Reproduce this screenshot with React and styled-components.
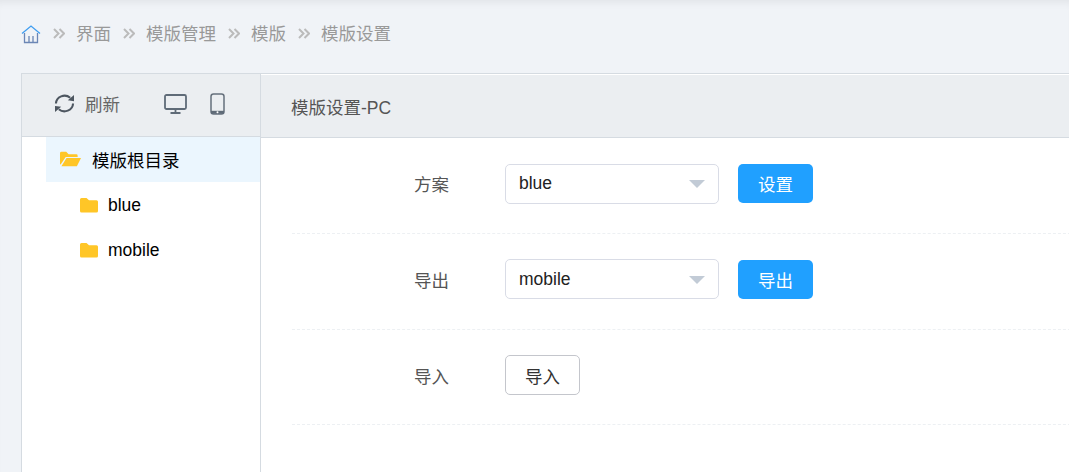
import React from "react";
import styled, { createGlobalStyle } from "styled-components";

const Global = createGlobalStyle`
  html, body { margin: 0; padding: 0; height: 100%; overflow: hidden; background: #f0f3f7; }
  body { font-family: "Liberation Sans", "Noto Sans CJK SC", sans-serif; }
  * { box-sizing: border-box; }
`;
const Page = styled.div`
  width: 1069px; height: 472px; overflow: hidden; background: #f0f3f7;
  box-shadow: inset 0 8px 8px -6px rgba(0,0,0,.07);
`;
const Crumbs = styled.nav`
  height: 73px; padding: 0 0 6px 21px; display: flex; align-items: center;
  font-size: 17.5px; color: #999;
`;
const CrumbText = styled.span`line-height: 24px;`;
const Sep = styled.svg`width: 12px; height: 11px; margin: 0 11px 0 12px; flex: none;`;
const Workspace = styled.div`
  display: flex; width: 1100px; height: 399px;
  border-top: 1px solid #d5dbe1; border-left: 1px solid #d5dbe1; margin-left: 21px;
`;
const Side = styled.aside`
  width: 239px; flex: none; background: #fff; border-right: 1px solid #d5dbe1;
`;
const SideBar = styled.div`
  height: 63px; background: #ebeef1; border-bottom: 1px solid #d5dbe1;
  display: flex; align-items: center; padding: 0 0 3px 32px; color: #666; font-size: 17.5px;
`;
const RefreshLabel = styled.span`margin-left: 10px; margin-right: 44px;`;
const Phone = styled.svg`margin-left: 23px;`;
const TreeRoot = styled.div`
  margin-left: 24px; height: 45px; background: #ebf6fe; display: flex; align-items: center;
  padding: 0 0 1px 14px; font-size: 17.5px; color: #000; gap: 11px;
`;
const TreeItem = styled.div`
  height: 45px; padding-left: 58px; padding-top: 1px; display: flex; align-items: center; gap: 10px;
  font-size: 17.5px; color: #000;
`;
const Main = styled.main`flex: 1; background: #fff;`;
const MainHead = styled.header`
  height: 63px; margin-top: 1px; background: #ebeef1; border-bottom: 1px solid #d5dbe1;
  display: flex; align-items: center; padding: 0 0 0 30px; font-size: 17.5px; color: #555;
`;
const Form = styled.div`padding-left: 31px;`;
const Row = styled.div`
  height: ${p => p.$h}px; border-bottom: 1px dashed #edf0f3;
  display: flex; align-items: center; padding: 0 0 ${p => p.$pb}px 122px;
`;
const Label = styled.label`width: 91px; font-size: 17.5px; color: #555; flex: none;`;
const Select = styled.div`
  width: 214px; height: 40px; border: 1px solid #d9dce6; border-radius: 5px; background: #fff;
  display: flex; align-items: center; justify-content: space-between;
  padding: 0 13px ${p => p.$pb}px 13px; font-size: 17.5px; color: #222;
`;
const Caret = styled.i`
  width: 0; height: 0; border-left: 8px solid transparent; border-right: 8px solid transparent;
  border-top: 8px solid #c2cbd6; margin-top: 1px;
`;
const Primary = styled.button`
  width: 75px; height: 39px; margin-left: 19px; border: 0; border-radius: 5px; background: #20a0ff;
  color: #fff; font: inherit; font-size: 17.5px; padding: 0;
`;
const Plain = styled.button`
  width: 75px; height: 40px; border: 1px solid #c4c6cc; border-radius: 5px; background: #fff;
  color: #333; font: inherit; font-size: 17.5px; padding: 0;
`;

const Chevrons = () => (
  <Sep viewBox="0 0 12 11" fill="none" stroke="#bbb" strokeWidth="2">
    <path d="M1 1l4.500 4.500L1 10M6.500 1L11 5.500 6.500 10" />
  </Sep>
);
const Folder = () => (
  <svg width="18" height="16" viewBox="0 0 18 16">
    <path fill="#ffc627" d="M0 2.500A1.500 1.500 0 0 1 1.500 1h5L9 3.300h7.500A1.500 1.500 0 0 1 18 4.800V14a1.500 1.500 0 0 1-1.500 1.500h-15A1.500 1.500 0 0 1 0 14z" />
  </svg>
);
const OpenFolder = () => (
  <svg width="21" height="16" viewBox="0 0 22 16">
    <path fill="#ffc627" d="M0 2a1.500 1.500 0 0 1 1.500-1.500h5L9 3h8a1.500 1.500 0 0 1 1.500 1.500V6H6L1.200 13 0 14z" />
    <path fill="#ffc627" d="M6.800 7H22l-4.300 8.500H1.500z" />
  </svg>
);

export default function App() {
  return (
    <Page>
      <Global />
      <Crumbs>
        <svg width="20" height="20" viewBox="0 0 20 20" fill="none" strokeWidth="1.300">
          <path stroke="#3f9df0" d="M1 9.500L10 2l9 7.500" />
          <path stroke="#6b86b5" d="M3.500 9v9.500h13V9M8 18.500V12M12 18.500V12" />
        </svg>
        <Chevrons /><CrumbText>界面</CrumbText>
        <Chevrons /><CrumbText>模版管理</CrumbText>
        <Chevrons /><CrumbText>模版</CrumbText>
        <Chevrons /><CrumbText>模版设置</CrumbText>
      </Crumbs>
      <Workspace>
        <Side>
          <SideBar>
            <svg width="21" height="19" viewBox="0 0 22 20" fill="none" stroke="#4d5660" strokeWidth="2.200">
              <path d="M2 10a9 8.500 0 0 1 15-6M20 10a9 8.500 0 0 1-15 6" />
              <path fill="#4d5660" stroke="none" d="M14.500 6.500L21 7.500V1zM7.500 13.500L1 12.500v6.500z" />
            </svg>
            <RefreshLabel>刷新</RefreshLabel>
            <svg width="23" height="20" viewBox="0 0 23 20" fill="none" stroke="#5f6b78" strokeWidth="1.800">
              <rect x="1" y="1" width="21" height="14" rx="1.500" />
              <path d="M11.500 15v3.500M6.500 19h10" />
            </svg>
            <Phone width="15" height="22" viewBox="0 0 15 22" fill="none" stroke="#66707c" strokeWidth="1.500">
              <rect x="1" y="1" width="13" height="20" rx="2.500" />
              <path d="M1 19.300h13" strokeWidth="3" stroke="#5f6b78" />
              <circle cx="7.500" cy="19.300" r="1" fill="#fff" stroke="none" />
            </Phone>
          </SideBar>
          <TreeRoot><OpenFolder />模版根目录</TreeRoot>
          <TreeItem><Folder />blue</TreeItem>
          <TreeItem><Folder />mobile</TreeItem>
        </Side>
        <Main>
          <MainHead>模版设置-PC</MainHead>
          <Form>
            <Row $h={96} $pb={4}>
              <Label>方案</Label>
              <Select $pb={1}>blue<Caret /></Select>
              <Primary>设置</Primary>
            </Row>
            <Row $h={96} $pb={5}>
              <Label>导出</Label>
              <Select $pb={0}>mobile<Caret /></Select>
              <Primary>导出</Primary>
            </Row>
            <Row $h={95} $pb={4}>
              <Label>导入</Label>
              <Plain>导入</Plain>
            </Row>
          </Form>
        </Main>
      </Workspace>
    </Page>
  );
}
